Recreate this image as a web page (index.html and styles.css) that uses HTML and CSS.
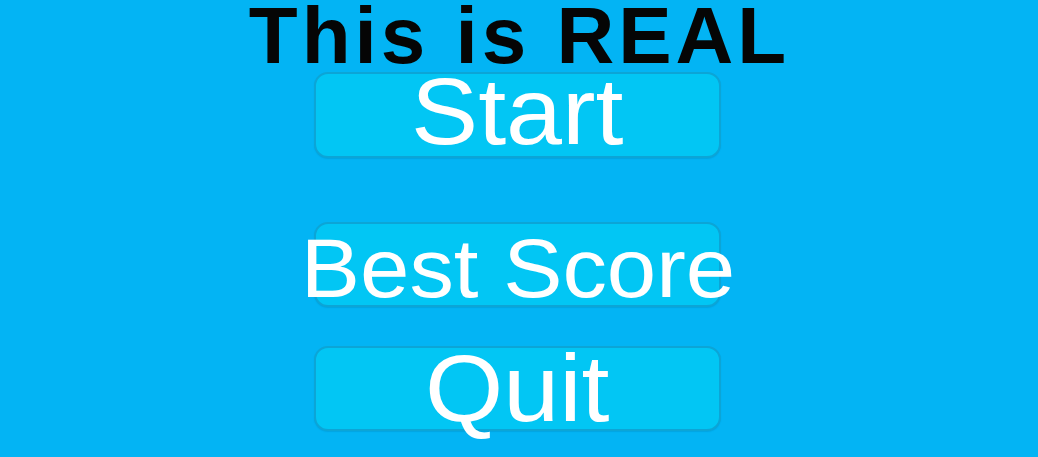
FILE: index.html
```html
<!DOCTYPE html>
<html lang="en">
<head>
<meta charset="utf-8">
<title>This is REAL</title>
<link rel="stylesheet" href="styles.css">
</head>
<body>
<main class="menu">
  <h1 class="title">This is REAL</h1>
  <button class="btn btn-start"><span class="label label-lg label-up">Start</span></button>
  <button class="btn btn-best"><span class="label label-md">Best Score</span></button>
  <button class="btn btn-quit"><span class="label label-lg">Quit</span></button>
</main>
</body>
</html>
```

FILE: styles.css
```css
html, body {
  margin: 0;
  padding: 0;
  height: 100%;
}
body {
  background: #03b4f4;
  font-family: "Liberation Sans", Arial, sans-serif;
  overflow: hidden;
}
.menu {
  display: flex;
  flex-direction: column;
  align-items: center;
  width: 1038px;
  height: 457px;
}
.title {
  margin: 0 0 0 1px;
  font-size: 80px;
  line-height: 72px;
  height: 70px;
  font-weight: 700;
  letter-spacing: 4px;
  color: #050505;
  white-space: nowrap;
}
.label {
  display: inline-block;
  transform: scaleX(1.07);
  line-height: 1;
}
.btn {
  box-sizing: border-box;
  width: 407px;
  height: 86px;
  margin: 0 0 0 -3px;
  padding: 0;
  display: flex;
  align-items: center;
  justify-content: center;
  background: #02c6f4;
  border: 2px solid #0ca5d6;
  border-radius: 14px;
  box-shadow: 0 1px 1px rgba(0, 120, 170, 0.25);
  color: #ffffff;
  font-family: "Liberation Sans", Arial, sans-serif;
  overflow: visible;
  white-space: nowrap;
}
.btn-start {
  margin-top: 2px;
}
.btn-best {
  margin-top: 64px;
  height: 85px;
}
.btn-quit {
  margin-top: 39px;
  height: 85px;
}
.label-lg {
  font-size: 94px;
}
.label-up {
  padding-bottom: 6px;
}
.label-md {
  font-size: 83px;
  padding-top: 8px;
}
```
